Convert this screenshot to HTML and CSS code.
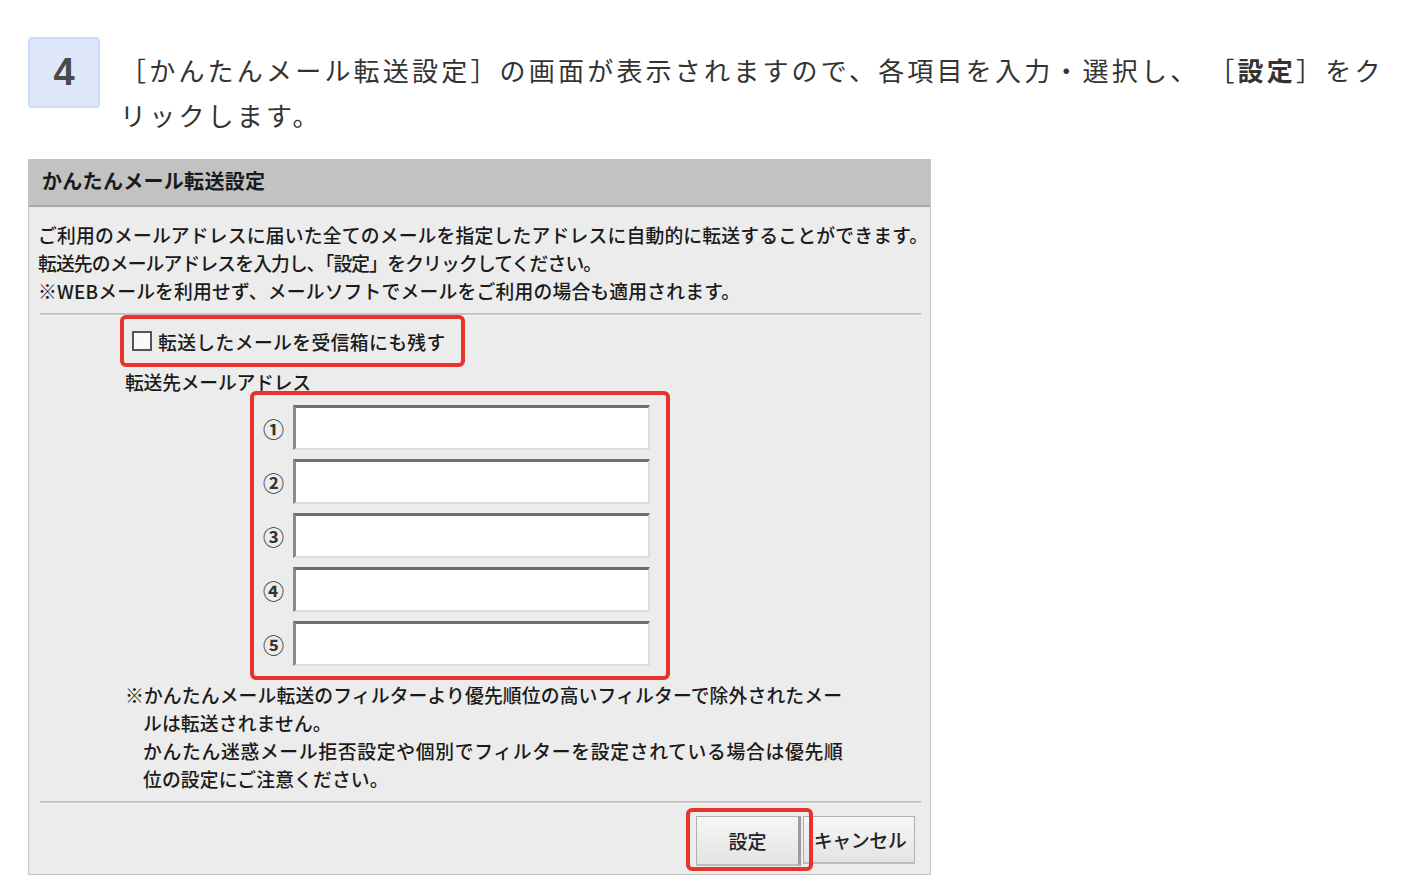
FILE: index.html
```html
<!DOCTYPE html>
<html lang="ja">
<head>
    <meta charset="UTF-8">
    <meta name="viewport" content="width=device-width, initial-scale=1.0">
    <title>かんたんメール転送設定</title>
    <link rel="stylesheet" href="styles.css">
</head>
<body>
    <div class="step">
        <div class="step-num">4</div>
        <p class="step-text">［かんたんメール転送設定］の画面が表示されますので、各項目を入力・選択し、 ［<b>設定</b>］をク<br>リックします。</p>
    </div>

    <!-- 設定画面 -->
    <div class="panel">
        <div class="panel-head">かんたんメール転送設定</div>
        <div class="panel-body">
            <p class="desc">ご利用のメールアドレスに届いた全てのメールを指定したアドレスに自動的に転送することができます。<br><span class="tight">転送先のメールアドレスを入力し､「設定」をクリックしてください。</span><br>※WEBメールを利用せず、メールソフトでメールをご利用の場合も適用されます。</p>
            <hr class="line">

            <div class="form">
                <div class="mark check-mark">
                    <label class="check"><span class="check-box"></span>転送したメールを受信箱にも残す</label>
                </div>
                <p class="label">転送先メールアドレス</p>
                <div class="mark addr-mark">
                    <div class="addr-row"><span class="num">①</span><span class="addr"></span></div>
                    <div class="addr-row"><span class="num">②</span><span class="addr"></span></div>
                    <div class="addr-row"><span class="num">③</span><span class="addr"></span></div>
                    <div class="addr-row"><span class="num">④</span><span class="addr"></span></div>
                    <div class="addr-row"><span class="num">⑤</span><span class="addr"></span></div>
                </div>
                <p class="note">※かんたんメール転送のフィルターより優先順位の高いフィルターで除外されたメー<br>ルは転送されません。<br><span class="wide">かんたん迷惑メール拒否設定や個別でフィルターを設定されている場合は優先順</span><br>位の設定にご注意ください。</p>
            </div>
            <hr class="line">

            <div class="btns">
                <div class="mark btn-mark"><button class="btn">設定</button></div>
                <button class="btn btn-cancel">キャンセル</button>
            </div>
        </div>
    </div>
</body>
</html>
```

FILE: styles.css
```css
*{
    box-sizing: border-box;
}

body{
    margin: 0;
    background: #fff;
    color: #333;
    font-family: "Noto Sans CJK JP", "Noto Sans", sans-serif;
}

/* ステップ見出し */
.step{
    display: flex;
    gap: 22px;
    padding: 37px 0 0 28px;
}
.step-num{
    flex: none;
    width: 72px;
    height: 71px;
    background: #dfe8fb;
    border: 2px solid #cddbf6;
    border-radius: 4px;
    display: flex;
    align-items: center;
    justify-content: center;
    font-family: "Liberation Sans", Arial, sans-serif;
    font-weight: bold;
    font-size: 38px;
    color: #4a4a4a;
}
.step-text{
    margin: 10px 0 0 -2px;
    font-size: 26px;
    line-height: 45px;
    letter-spacing: 3.2px;
    color: #333;
}
.step-text b{
    font-weight: bold;
}

/* 画面キャプチャ */
.panel{
    width: 903px;
    height: 716px;
    margin: 22px 0 0 28px;
    border: 1px solid #c4c4c4;
    background: #ececec;
    color: #1a1a1a;
    font-size: 18.8px;
    font-weight: 500;
}
.panel-head{
    height: 47px;
    background: #c2c2c2;
    border-bottom: 2px solid #a8a8a8;
    padding-left: 13px;
    font-weight: bold;
    font-size: 20px;
    line-height: 42px;
    letter-spacing: 0.3px;
}
.panel-body{
    padding: 0 9px 0 11px;
}
.desc{
    margin: 14px 0 0 -2px;
    line-height: 28px;
    letter-spacing: 0.2px;
    white-space: nowrap;
}
.desc .tight{
    letter-spacing: -0.85px;
}
.line{
    margin: 8px 0 0 0;
    height: 3px;
    border: none;
    border-top: 2px solid #c4c4c4;
    border-bottom: 1px solid #f6f6f6;
}

.mark{
    border: 4px solid #e8332a;
    border-radius: 6px;
}

.form{
    padding-left: 80px;
}
.check-mark{
    width: 345px;
    height: 52px;
    margin-top: -1px;
    padding-left: 8px;
    display: flex;
    align-items: center;
}
.check{
    display: flex;
    align-items: center;
    gap: 6px;
    letter-spacing: 0.4px;
}
.check-box{
    width: 20px;
    height: 20px;
    border: 2px solid #555;
    background: #fafafa;
}
.label{
    margin: 1px 0 0 5px;
    line-height: 28px;
    letter-spacing: -0.2px;
}
.addr-mark{
    width: 420px;
    margin: -5px 0 0 130px;
    padding: 10px 16px 10px 9px;
    display: flex;
    flex-direction: column;
    gap: 9px;
}
.addr-row{
    display: flex;
    align-items: center;
    gap: 9px;
}
.num{
    width: 21px;
    font-size: 21px;
    font-weight: bold;
    color: #333;
    text-align: center;
}
.addr{
    flex: 1;
    height: 45px;
    background: #fff;
    border-top: 3px solid #6e6e6e;
    border-left: 3px solid #8a8a8a;
    border-right: 2px solid #dedede;
    border-bottom: 2px solid #dedede;
}
.note{
    margin: 1px 0 0 5px;
    padding-left: 18px;
    text-indent: -18px;
    line-height: 28px;
    letter-spacing: 0.15px;
    white-space: nowrap;
}
.note .wide{
    letter-spacing: 0.7px;
}

/* ボタン */
.btns{
    display: flex;
    justify-content: flex-end;
    align-items: center;
    padding: 4px 6px 0 0;
}
.btn-mark{
    position: relative;
    z-index: 1;
    height: 63px;
    padding: 4px 8px 0 6px;
}
.btn{
    appearance: none;
    width: 105px;
    height: 50px;
    background: linear-gradient(#f6f6f6, #e4e4e4);
    border: 1px solid #b0b0b0;
    border-right: 3px solid #9c9c9c;
    border-bottom: 2px solid #bcbcbc;
    font-family: inherit;
    font-weight: 500;
    font-size: 19px;
    color: #222;
    padding: 0;
}
.btn-cancel{
    width: 112px;
    height: 48px;
    margin-left: -10px;
    padding-left: 2px;
    border-right: 1px solid #b0b0b0;
    letter-spacing: -0.5px;
}
```
